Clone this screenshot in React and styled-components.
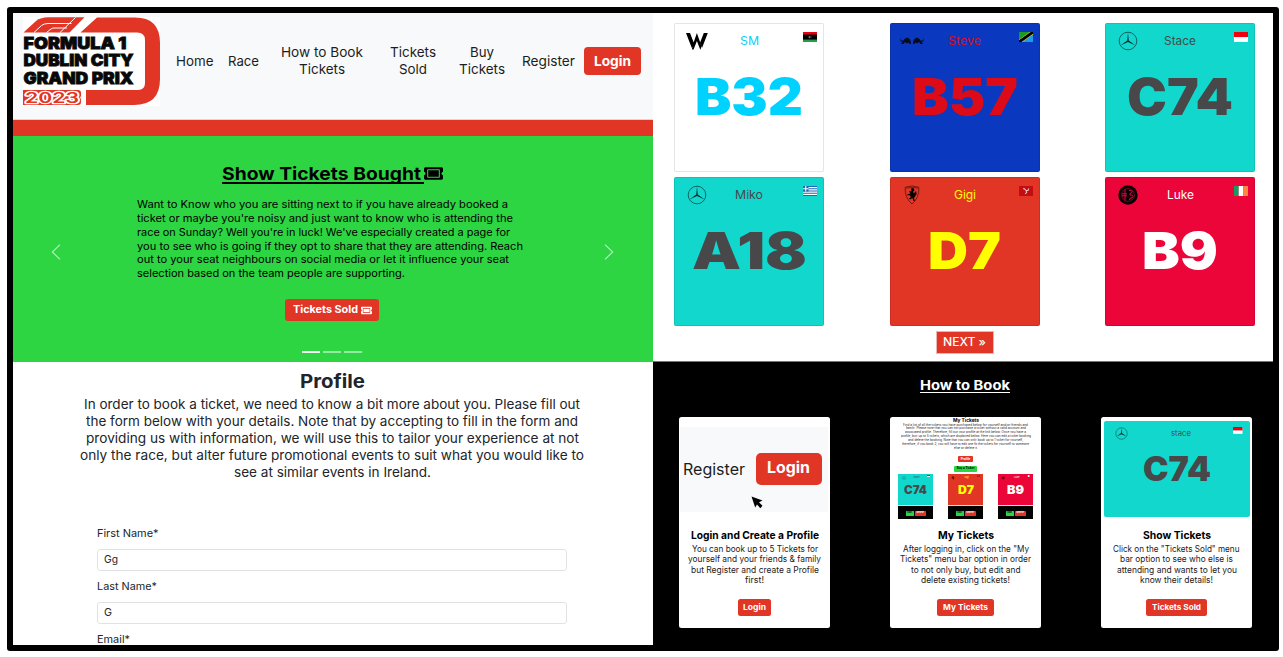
import React, { useLayoutEffect, useRef, useState } from "react";
import styled, { createGlobalStyle } from "styled-components";
import { FaTicketAlt } from "react-icons/fa";
import { SiFerrari, SiAlfaromeo } from "react-icons/si";

const red = "#e13526";
const green = "#2dd543";
const teal = "#12d7cd";
const grey = "#48484a";

const GlobalStyle = createGlobalStyle`
  * { box-sizing: border-box; }
  body { margin: 0; background: #fff; color: #212529; font-family: Inter, "Liberation Sans", sans-serif; }
  h1, h2, h3, p { margin: 0; font-weight: inherit; font-size: inherit; }
`;

/* ---------- text set to an exact measure ---------- */
const FitBox = styled.span`
  display: block;
  flex: none;
  width: ${(p) => p.$w}px;
  white-space: nowrap;
  text-align: left;
`;
const FitInner = styled.span`
  display: inline-block;
  transform-origin: 0 50%;
  vertical-align: top;
`;
function Fit({ w, children }) {
  const ref = useRef(null);
  const [scale, setScale] = useState(1);
  useLayoutEffect(() => {
    const el = ref.current;
    el.style.transform = "none";
    const natural = el.getBoundingClientRect().width;
    const next = natural ? w / natural : 1;
    el.style.transform = `scaleX(${next})`;
    setScale(next);
  }, [w]);
  return (
    <FitBox $w={w}>
      <FitInner ref={ref} style={{ transform: `scaleX(${scale})` }}>{children}</FitInner>
    </FitBox>
  );
}

const Lines = styled.p`
  display: flex;
  flex-direction: column;
  align-items: ${(p) => (p.$left ? "flex-start" : "center")};
  font-size: ${(p) => p.$size}px;
  line-height: ${(p) => p.$lh}px;
  font-weight: ${(p) => p.$weight || 400};
`;
const TextLines = ({ lines, ...rest }) => (
  <Lines {...rest}>
    {lines.map(([text, w]) => <Fit key={text} w={w}>{text}</Fit>)}
  </Lines>
);

/* ---------- frame ---------- */
const Page = styled.div`
  width: 1283px;
  height: 657px;
  padding: 7px 4px 6px 7px;
  overflow: hidden;
`;
const Frame = styled.main`
  width: 1272px;
  height: 644px;
  border: 6px solid #000;
  border-radius: 3px;
  display: grid;
  grid-template-columns: 640px 620px;
  overflow: hidden;
`;
const Column = styled.div`
  display: flex;
  flex-direction: column;
  height: 632px;
  overflow: hidden;
`;

/* ---------- header ---------- */
const Header = styled.header`
  height: 107px;
  flex: none;
  display: flex;
  background: #f8f9fb;
  border-bottom: 1px solid #d5d9de;
  padding: 4px 12px 0 10px;
`;
const Logo = styled.svg`
  display: block;
  width: 137px;
  height: 89px;
  flex: none;
`;
const Nav = styled.nav`
  display: flex;
  align-items: center;
  height: 88px;
  font-size: 13.6px;
  line-height: 17px;
  color: #1b1e21;
`;
const NavItem = styled.a`
  display: flex;
  flex-direction: column;
  align-items: center;
  margin-left: ${(p) => p.$gap}px;
`;
const Button = styled.button`
  display: flex;
  align-items: center;
  justify-content: center;
  gap: 3px;
  flex: none;
  border: 0;
  padding: 0;
  font-family: inherit;
  font-weight: 700;
  color: ${(p) => p.$color || "#fff"};
  background: ${(p) => p.$bg || red};
  width: ${(p) => p.$w}px;
  height: ${(p) => p.$h}px;
  font-size: ${(p) => p.$size}px;
  line-height: 1.2;
  border-radius: ${(p) => (p.$r === undefined ? 4 : p.$r)}px;
  margin-left: ${(p) => p.$ml || 0}px;
  margin-top: ${(p) => p.$mt || 0}px;
`;
const RedBar = styled.div`
  height: 16px;
  flex: none;
  background: ${red};
`;

/* ---------- carousel ---------- */
const Carousel = styled.section`
  height: 225.5px;
  flex: none;
  background: ${green};
  color: #000;
  display: grid;
  grid-template-columns: 86px 1fr 88px;
  align-items: center;
`;
const Slide = styled.div`
  align-self: stretch;
  display: flex;
  flex-direction: column;
  align-items: center;
  padding-top: 27px;
`;
const SlideTitle = styled.h2`
  display: flex;
  align-items: center;
  font-size: 18px;
  font-weight: 700;
  line-height: 24px;
  svg { width: 19px; height: 17px; }
`;
const TitleUnderline = styled.span`
  border-bottom: 2px solid #000;
  line-height: 17px;
  width: 202px;
  margin-top: 2px;
`;
const SlideCopy = styled.div`
  align-self: flex-start;
  padding-left: 38px;
  margin-top: 14px;
`;
const Indicators = styled.div`
  display: flex;
  gap: 3.5px;
  margin-top: 30px;
`;
const Indicator = styled.span`
  width: 17.5px;
  height: 2px;
  background: #fff;
  opacity: ${(p) => (p.$active ? 0.95 : 0.5)};
`;
const Chevron = styled.svg`
  width: 10px;
  height: 16px;
  justify-self: center;
  margin-top: 7px;
  fill: none;
  stroke: #fff;
  stroke-opacity: 0.65;
  stroke-width: 1.1;
`;

/* ---------- profile ---------- */
const Profile = styled.section`
  padding-top: 7px;
  display: flex;
  flex-direction: column;
  align-items: center;
`;
const ProfileTitle = styled.h2`
  font-size: 18.6px;
  font-weight: 700;
  line-height: 24px;
  margin-bottom: 3px;
  margin-left: -2px;
`;
const ProfileCopy = styled.div`
  margin-left: -2px;
`;
const Form = styled.form`
  width: 470px;
  margin: 45px 0 0 -2px;
  font-size: 10.6px;
`;
const Label = styled.label`
  display: block;
  height: 31px;
  line-height: 14px;
  padding-top: 1px;
`;
const Field = styled.div`
  display: flex;
  align-items: center;
  height: 22px;
  padding-left: 6px;
  border: 1px solid #dfe3e6;
  border-radius: 3px;
  margin: -8px 0 8px;
`;

/* ---------- seats ---------- */
const Seats = styled.section`
  height: 348px;
  flex: none;
  padding: 10px 0 0 21px;
`;
const SeatGrid = styled.div`
  display: grid;
  grid-template-columns: repeat(3, 150px);
  column-gap: 65.7px;
  row-gap: 5px;
`;
const SeatCard = styled.article`
  height: 149px;
  border: 1px solid rgba(0, 0, 0, 0.1);
  border-radius: 2px;
  background: ${(p) => p.$bg};
  color: ${(p) => p.$color};
`;
const SeatHead = styled.div`
  display: grid;
  grid-template-columns: 31px 1fr 31px;
  align-items: center;
  justify-items: center;
  height: 20px;
  margin: 7px 6px 0;
  font-size: 11.4px;
`;
const LogoCell = styled.span`
  display: flex;
  color: #000;
  svg { display: block; }
`;
const FlagSvg = styled.svg`
  display: block;
  width: ${(p) => p.$w}px;
  height: ${(p) => p.$w * 0.72}px;
  justify-self: end;
  align-self: start;
  margin-top: ${(p) => p.$mt}px;
`;
const SeatNumber = styled.div`
  display: flex;
  justify-content: center;
  font-weight: 900;
  font-size: ${(p) => p.$size}px;
  line-height: ${(p) => p.$lh}px;
  margin-top: ${(p) => p.$mt || 0}px;
`;
const Pager = styled.div`
  display: flex;
  justify-content: center;
  width: 581.4px;
  margin-top: 5px;
`;
const NextButton = styled(Button)`
  font-weight: 500;
  outline: 1px solid #eeb5b0;
  outline-offset: -1px;
`;
const NextLabel = styled.span`
  padding-top: 2px;
`;

/* ---------- how to book ---------- */
const HowTo = styled.section`
  flex: 1;
  background: #000;
  border-top: 1px solid #777;
  display: flex;
  flex-direction: column;
  padding: 15px 0 0 26.4px;
`;
const HowTitle = styled.h2`
  width: 90px;
  margin-left: 241px;
  color: #fff;
  font-size: 13px;
  font-weight: 700;
  line-height: 16px;
  height: 16px;
  border-bottom: 1px solid #fff;
`;
const Steps = styled.div`
  display: grid;
  grid-template-columns: repeat(3, 150.5px);
  column-gap: 60.5px;
  margin-top: 23.5px;
`;
const Step = styled.article`
  height: 211.5px;
  background: #fff;
  border-radius: 2.5px;
  display: flex;
  flex-direction: column;
  align-items: center;
  color: #1d2023;
`;
const StepArt = styled.div`
  height: 112px;
  width: 100%;
  flex: none;
`;
const StepTitle = styled.h3`
  color: #000;
  font-size: 10.6px;
  font-weight: 700;
  line-height: 14px;
  margin-bottom: 1px;
`;
const LoginArt = styled.div`
  width: 148px;
  height: 85px;
  background: #f8f9fa;
  padding: 26px 0 0 3px;
  color: #1b1e21;
`;
const LoginRow = styled.div`
  display: flex;
  align-items: center;
  font-size: 16px;
`;
const Cursor = styled.svg`
  display: block;
  width: 12px;
  height: 13px;
  margin: 11px 0 0 68px;
`;
const ArtPad = styled.div`
  padding: ${(p) => p.$pad};
`;
const ShowArt = styled.div`
  height: 96px;
  border-radius: 2px;
  background: ${teal};
  color: ${grey};
  padding: 6px 7px 0 11px;
`;
const ShowHead = styled.div`
  display: grid;
  grid-template-columns: 14px 1fr 10px;
  height: 12px;
  align-items: center;
  justify-items: center;
  font-size: 7.5px;
`;
const ShowNumber = styled.div`
  margin-left: -4px;
`;
const Mini = styled.div`
  display: flex;
  flex-direction: column;
  align-items: center;
`;
const MiniTitle = styled.div`
  font-size: 4.8px;
  font-weight: 700;
  line-height: 7px;
  color: #000;
`;
const MiniCards = styled.div`
  display: flex;
  gap: 14.7px;
  margin-top: 2.5px;
`;
const MiniCard = styled.div`
  width: 35.3px;
  height: 45px;
  background: #000;
`;
const MiniTop = styled.div`
  height: 31.5px;
  background: ${(p) => p.$bg};
  color: ${(p) => p.$color};
  border-bottom: 1px solid #d8e6e6;
`;
const MiniHead = styled.div`
  display: grid;
  grid-template-columns: 5px 1fr 3px;
  justify-items: center;
  align-items: center;
  height: 7px;
  padding: 0 3px;
  font-size: 2.4px;
  line-height: 3px;
`;
const MiniActions = styled.div`
  display: flex;
  justify-content: center;
  gap: 0.7px;
  margin-top: 5px;
`;

/* ---------- drawings ---------- */
const BrandLogo = () => (
  <Logo viewBox="0 0 137 89">
    <path fill="#fff" d="M0 0H137V89H0z" />
    <path fill={red} d="M57.500 15.500L74 .5H111Q137 0 137 26V62Q137 88 111 88H63V73H115Q122 73 122 66V23Q122 15.500 114 15.500z" />
    <path fill={red} d="M.5 15.500L13 4Q18 .3 25 .3H61.500L46.500 15.500z" />
    <path fill="none" stroke="#fff" strokeWidth="1" d="M11 15.500L18.500 8.500Q21 6.500 25 6.500H48.500M23.500 15.500L28 12Q29.500 11 31 11H44M52.500 .5L37 15.500" />
    <g fontFamily="Inter, sans-serif" fontWeight="900" fontSize="16" fill="#080808" stroke="#080808" strokeWidth=".8">
      <text x=".5" y="31.700" textLength="103" lengthAdjust="spacingAndGlyphs">FORMULA 1</text>
      <text x=".5" y="49.200" textLength="110" lengthAdjust="spacingAndGlyphs">DUBLIN CITY</text>
      <text x=".5" y="66.500" textLength="110" lengthAdjust="spacingAndGlyphs">GRAND PRIX</text>
    </g>
    <path fill={red} d="M0 73H55Q58 73 58 76V79L57 80.500L58 82V85Q58 88 55 88H0z" />
    <text x="2" y="85.700" fontFamily="Inter, sans-serif" fontWeight="600" fontSize="14" fill={red} stroke="#fff" strokeWidth="2.600" strokeLinejoin="round" paintOrder="stroke" textLength="54" lengthAdjust="spacingAndGlyphs">2023</text>
  </Logo>
);

const Mercedes = ({ size }) => (
  <svg width={size} height={size} viewBox="0 0 20 20">
    <circle cx="10" cy="10" r="8.800" fill="none" stroke="#0b4a4a" strokeWidth=".8" />
    <path fill="#062a2a" d="M10 1.200L10.700 9.400L17.600 14.500L10 11L2.400 14.500L9.300 9.400z" />
  </svg>
);
const Williams = () => (
  <svg width="22" height="17" viewBox="0 0 22 17">
    <path d="M0 0H4L7.700 9.500L5.800 15zM6.400 13L10.900 0L15.400 13L14.600 16.500H14.200L10.900 8L7.600 16.500H6zM21.800 0H17.800L14.100 9.500L16 15z" />
  </svg>
);
const RedBull = () => (
  <svg width="24" height="8" viewBox="0 0 24 8" fill="#070b1e">
    <path d="M0 1L1 3L3 4L5 1.500L8 .5L10.300 3L11 7H9.500L8.500 5.500L7 6.500L5 5L3.500 7H1L2.500 5L.5 4zM24 1L23 3L21 4L19 1.500L16 .5L13.700 3L13 7H14.500L15.500 5.500L17 6.500L19 5L20.500 7H23L21.500 5L23.500 4z" />
  </svg>
);
const FerrariBadge = () => (
  <svg width="16" height="20" viewBox="0 0 16 20">
    <path fill="none" stroke="#4a120c" strokeWidth=".7" d="M1.200 2.200Q8 -.2 14.800 2.200Q15.500 13 8 19Q.5 13 1.200 2.200z" />
    <path stroke="#4a120c" strokeWidth=".7" d="M2 3.200Q8 1.200 14 3.200" fill="none" />
    <path d="M7 3.500L9.500 3L10.500 5.500L9 6.500L9.800 8.500L12 6L12.600 9L11 11.500L10 13L10.800 16H9.500L8.500 13L6 14.500L5 13.500L7 12L5.500 10L3.500 10.500L3.300 9.500L6.500 8.500L5 6.500L7.500 6z" />
  </svg>
);
const AlfaBadge = () => (
  <svg width="20" height="20" viewBox="0 0 20 20" fill="none">
    <circle cx="10" cy="10" r="9.700" fill="#0a0204" />
    <circle cx="10" cy="10" r="6.400" stroke="#a50830" strokeWidth=".7" />
    <path stroke="#eb0539" strokeWidth="1" d="M7 4.500V15.500M4 8.800H9M4 10.800H9M11 5.500Q15 5 14 7.500Q11 8.500 12 10Q16 10 14.500 12.500Q11 13 11.500 15" />
  </svg>
);

const flags = {
  libya: <><path fill="#e70013" d="M0 0H14V3H0z" /><path d="M0 2.500H14V8H0z" /><path fill="#239e46" d="M0 7.500H14V10H0z" /><circle cx="6.700" cy="5" r="1.100" fill="#bbb" /><circle cx="7.100" cy="5" r=".8" /><circle cx="8.200" cy="5" r=".4" fill="#bbb" /></>,
  tanzania: <><path fill="#1a9a20" d="M0 0H14L0 10z" /><path fill="#1b9af0" d="M14 0V10H0z" /><path stroke="#e0cc30" strokeWidth="3.900" d="M0 10L14 0" /><path stroke="#000" strokeWidth="2.800" d="M-1 10.700L15 -.7" /></>,
  indonesia: <><path fill="#fff" d="M0 0H14V10H0z" /><path fill="#f0000f" d="M0 0H14V5H0z" /></>,
  greece: <><path fill="#fff" d="M0 0H14V10H0z" /><path stroke="#1f66b5" strokeWidth="1.100" d="M0 .55H14M0 2.770H14M0 5H14M0 7.220H14M0 9.450H14" /><path fill="#1f66b5" d="M0 0H5.500V5.500H0z" /><path stroke="#fff" strokeWidth="1.100" d="M2.750 0V5.500M0 2.750H5.500" /></>,
  man: <><path fill="#c40d10" d="M0 0H14V10H0z" /><path fill="none" stroke="#e8c8c8" strokeWidth="1" d="M7 4.500L5.500 2.800H4M7 4.500L9 4.500L9.700 2.500M7 4.500L7.700 6.500L6 7.800" /></>,
  ireland: <><path fill="#169b62" d="M0 0H4.700V10H0z" /><path fill="#fff" d="M4.700 0H9.400V10H4.700z" /><path fill="#ff883e" d="M9.400 0H14V10H9.400z" /></>,
};
const Flag = ({ name, w = 14, mt = 1 }) => (
  <FlagSvg $w={w} $mt={mt} viewBox="0 0 14 10" preserveAspectRatio="none">{flags[name]}</FlagSvg>
);

const seats = [
  { seat: "B32", w: 108, name: "SM", nw: 19, bg: "#fff", color: "#00d2ff", flag: "libya", logo: <Williams /> },
  { seat: "B57", w: 106, name: "Steve", nw: 33, bg: "#0a39c0", color: "#dd0b18", flag: "tanzania", logo: <RedBull /> },
  { seat: "C74", w: 106, name: "Stace", nw: 32, bg: teal, color: grey, flag: "indonesia", logo: <Mercedes size={20} /> },
  { seat: "A18", w: 115, name: "Miko", nw: 28, bg: teal, color: grey, flag: "greece", logo: <Mercedes size={20} /> },
  { seat: "D7", w: 73, name: "Gigi", nw: 22, bg: red, color: "#ffff00", flag: "man", logo: <FerrariBadge /> },
  { seat: "B9", w: 76, name: "Luke", nw: 27, bg: "#eb0539", color: "#fff", flag: "ireland", logo: <AlfaBadge /> },
];

const navItems = [
  { gap: 16.3, lines: [["Home", 37.500]] },
  { gap: 14, lines: [["Race", 31]] },
  { gap: 22, lines: [["How to Book", 82], ["Tickets", 46]] },
  { gap: 27, lines: [["Tickets", 46], ["Sold", 28]] },
  { gap: 23, lines: [["Buy", 24], ["Tickets", 46]] },
  { gap: 17.2, lines: [["Register", 53]] },
];

const miniSeats = [
  { seat: "C74", w: 23, name: "stace", bg: teal, color: grey, flag: "indonesia", logo: <Mercedes size={4} /> },
  { seat: "D7", w: 16, name: "Gigi", bg: red, color: "#ffff00", flag: "man", logo: <SiFerrari size={4} /> },
  { seat: "B9", w: 17, name: "Luke", bg: "#eb0539", color: "#fff", flag: "ireland", logo: <SiAlfaromeo size={4} /> },
];

const TicketsPreview = () => (
  <Mini>
    <MiniTitle><Fit w={26}>My Tickets</Fit></MiniTitle>
    <TextLines $size={2.9} $lh={3.95} lines={[
      ["Find a list of all the tickets you have purchased below for yourself and/or friends and", 125],
      ["family. Please note that you can not purchase a ticket without a valid account and", 120],
      ["associated profile. Therefore, fill out your profile at the link below. Once you have a", 121],
      ["profile, buy up to 5 tickets, which are displayed below. Here you can edit a ticket booking", 130],
      ["and delete the booking. Note that you can only book up to 1 ticket for yourself,", 115],
      ["therefore, if you book 2, you will have to edit one fo the tickets for yourself to someone", 127],
      ["else or delete it.", 24],
    ]} />
    <Button $w={14.500} $h={6} $size={3} $r={1} $mt={5.3}>Profile</Button>
    <Button $w={23} $h={6} $size={3} $r={1} $mt={3.3} $bg={green} $color="#000">Buy a Ticket</Button>
    <MiniCards>
      {miniSeats.map((s) => (
        <MiniCard key={s.seat}>
          <MiniTop $bg={s.bg} $color={s.color}>
            <MiniHead><LogoCell>{s.logo}</LogoCell><span>{s.name}</span><Flag name={s.flag} w={3} /></MiniHead>
            <SeatNumber $size={12} $lh={17}><Fit w={s.w}>{s.seat}</Fit></SeatNumber>
          </MiniTop>
          <MiniActions>
            <Button $w={8.500} $h={5} $size={2.4} $r={0.6} $bg={green} $color="#000">Edit</Button>
            <Button $w={11} $h={5} $size={2.4} $r={0.6}>Delete</Button>
          </MiniActions>
        </MiniCard>
      ))}
    </MiniCards>
  </Mini>
);

const LoginPreview = () => (
  <ArtPad $pad="10px 1px 0">
    <LoginArt>
      <LoginRow>
        <Fit w={62}>Register</Fit>
        <Button $w={66} $h={32.500} $size={15.500} $r={5} $ml={10.500}><Fit w={43}>Login</Fit></Button>
      </LoginRow>
      <Cursor viewBox="0 0 12 13"><path d="M.5 .5L11.500 4.500L8 6.300L11.500 9.800L9.300 12.300L6 8.500L4.200 11.500z" /></Cursor>
    </LoginArt>
  </ArtPad>
);

const SeatPreview = () => (
  <ArtPad $pad="4.5px 2px 0 2.5px">
    <ShowArt>
      <ShowHead><LogoCell><Mercedes size={13} /></LogoCell><Fit w={20}>stace</Fit><Flag name="indonesia" w={9.500} mt={0} /></ShowHead>
      <ShowNumber><SeatNumber $size={34} $lh={40} $mt={10}><Fit w={68}>C74</Fit></SeatNumber></ShowNumber>
    </ShowArt>
  </ArtPad>
);

const steps = [
  {
    title: ["Login and Create a Profile", 128], art: <LoginPreview />, button: ["Login", 23], bw: 33.500,
    lines: [["You can book up to 5 Tickets for", 126], ["yourself and your friends & family", 133], ["but Register and create a Profile", 128], ["first!", 19]],
  },
  {
    title: ["My Tickets", 56], art: <TicketsPreview />, button: ["My Tickets", 45], bw: 56.500,
    lines: [['After logging in, click on the "My', 126], ['Tickets" menu bar option in order', 131], ["to not only buy, but edit and", 109.500], ["delete existing tickets!", 89]],
  },
  {
    title: ["Show Tickets", 68], art: <SeatPreview />, button: ["Tickets Sold", 49], bw: 61,
    lines: [['Click on the "Tickets Sold" menu', 126.500], ["bar option to see who else is", 113], ["attending and wants to let you", 120], ["know their details!", 73]],
  },
];

export default function App() {
  return (
    <Page>
      <GlobalStyle />
      <Frame>
        <Column>
          <Header>
            <BrandLogo />
            <Nav>
              {navItems.map((item, i) => (
                <NavItem key={i} $gap={item.gap}>
                  {item.lines.map(([t, w]) => <Fit key={t} w={w}>{t}</Fit>)}
                </NavItem>
              ))}
              <Button $w={56.500} $h={27.500} $size={13.4} $r={4} $ml={9.500}><Fit w={37}>Login</Fit></Button>
            </Nav>
          </Header>
          <RedBar />
          <Carousel>
            <Chevron viewBox="0 0 10 16"><path d="M9 .7L1.300 8L9 15.300" /></Chevron>
            <Slide>
              <SlideTitle>
                <TitleUnderline><Fit w={199}>Show Tickets Bought</Fit></TitleUnderline>
                <FaTicketAlt />
              </SlideTitle>
              <SlideCopy>
                <TextLines $left $size={10.8} $lh={13.85} lines={[
                  ["Want to Know who you are sitting next to if you have already booked a", 371],
                  ["ticket or maybe you're noisy and just want to know who is attending the", 376],
                  ["race on Sunday? Well you're in luck! We've especially created a page for", 373],
                  ["you to see who is going if they opt to share that they are attending. Reach", 386],
                  ["out to your seat neighbours on social media or let it influence your seat", 372],
                  ["selection based on the team people are supporting.", 268],
                ]} />
              </SlideCopy>
              <Button $w={94} $h={22} $size={10.400} $r={3} $mt={18}>
                <Fit w={65}>Tickets Sold</Fit><FaTicketAlt size={11} />
              </Button>
              <Indicators><Indicator $active /><Indicator /><Indicator /></Indicators>
            </Slide>
            <Chevron viewBox="0 0 10 16"><path d="M1 .7L8.700 8L1 15.300" /></Chevron>
          </Carousel>
          <Profile>
            <ProfileTitle><Fit w={65}>Profile</Fit></ProfileTitle>
            <ProfileCopy>
              <TextLines $size={13.3} $lh={17} lines={[
                ["In order to book a ticket, we need to know a bit more about you. Please fill out", 496],
                ["the form below with your details. Note that by accepting to fill in the form and", 492],
                ["providing us with information, we will use this to tailor your experience at not", 493],
                ["only the race, but alter future promotional events to suit what you would like to", 504],
                ["see at similar events in Ireland.", 197],
              ]} />
            </ProfileCopy>
            <Form>
              <Label><Fit w={61.500}>First Name*</Fit></Label>
              <Field><Fit w={14}>Gg</Fit></Field>
              <Label><Fit w={60}>Last Name*</Fit></Label>
              <Field><Fit w={8}>G</Fit></Field>
              <Label><Fit w={33}>Email*</Fit></Label>
            </Form>
          </Profile>
        </Column>
        <Column>
          <Seats>
            <SeatGrid>
              {seats.map((s) => (
                <SeatCard key={s.seat} $bg={s.bg} $color={s.color}>
                  <SeatHead><LogoCell>{s.logo}</LogoCell><Fit w={s.nw}>{s.name}</Fit><Flag name={s.flag} /></SeatHead>
                  <SeatNumber $size={51} $lh={56} $mt={18}><Fit w={s.w}>{s.seat}</Fit></SeatNumber>
                </SeatCard>
              ))}
            </SeatGrid>
            <Pager>
              <NextButton $w={58} $h={22.500} $size={11.400} $r={0}>
                <NextLabel><Fit w={43}>NEXT »</Fit></NextLabel>
              </NextButton>
            </Pager>
          </Seats>
          <HowTo>
            <HowTitle><Fit w={90}>How to Book</Fit></HowTitle>
            <Steps>
              {steps.map((s) => (
                <Step key={s.title[0]}>
                  <StepArt>{s.art}</StepArt>
                  <StepTitle><Fit w={s.title[1]}>{s.title[0]}</Fit></StepTitle>
                  <TextLines $size={8.6} $lh={10.55} lines={s.lines} />
                  <Button $w={s.bw} $h={17} $size={8.2} $r={2.5} $mt={13.5}><Fit w={s.button[1]}>{s.button[0]}</Fit></Button>
                </Step>
              ))}
            </Steps>
          </HowTo>
        </Column>
      </Frame>
    </Page>
  );
}
